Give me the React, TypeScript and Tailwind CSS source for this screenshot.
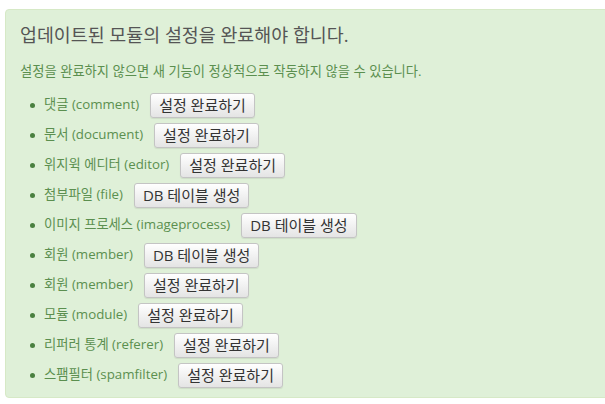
import React from 'react';

type Item = { label: string; action: string };

const items: Item[] = [
    { label: '댓글 (comment)', action: '설정 완료하기' },
    { label: '문서 (document)', action: '설정 완료하기' },
    { label: '위지윅 에디터 (editor)', action: '설정 완료하기' },
    { label: '첨부파일 (file)', action: 'DB 테이블 생성' },
    { label: '이미지 프로세스 (imageprocess)', action: 'DB 테이블 생성' },
    { label: '회원 (member)', action: 'DB 테이블 생성' },
    { label: '회원 (member)', action: '설정 완료하기' },
    { label: '모듈 (module)', action: '설정 완료하기' },
    { label: '리퍼러 통계 (referer)', action: '설정 완료하기' },
    { label: '스팸필터 (spamfilter)', action: '설정 완료하기' },
];

const App: React.FC = () => {
    return (
        <div
            className="w-[605px] h-[404px] overflow-hidden bg-white pt-[9px] pl-[5px]"
            style={{ fontFamily: '"Open Sans", "Noto Sans CJK KR", sans-serif' }}
        >
            <div className="w-[620px] h-[389px] bg-[#dff0d8] border border-[#d6e9c6] rounded-[4px] pl-[14px] pt-[11px]">
                <h2 className="text-[18.4px] leading-[28px] text-[#555] font-normal">
                    업데이트된 모듈의 설정을 완료해야 합니다.
                </h2>
                <p className="mt-[13px] text-[13.3px] leading-[18px] text-[#5b8f4f]">
                    설정을 완료하지 않으면 새 기능이 정상적으로 작동하지 않을 수 있습니다.
                </p>
                <ul className="mt-[10px] pl-[10px]">
                    {items.map((item, i) => (
                        <li key={i} className="h-[30px] flex items-center text-[13.3px] text-[#5b8f4f]">
                            <span className="w-[5px] h-[5px] rounded-full bg-[#4a8040] mr-[9px]" />
                            <span>{item.label}</span>
                            <button
                                type="button"
                                className="ml-[11px] h-[25px] px-[8px] text-[15px] text-[#333] border border-[#c4c4c4] rounded-[3px] bg-gradient-to-b from-white to-[#e4e4e4] shadow-[0_1px_1px_rgba(0,0,0,0.08)]"
                            >
                                {item.action}
                            </button>
                        </li>
                    ))}
                </ul>
            </div>
        </div>
    );
};

export default App;
